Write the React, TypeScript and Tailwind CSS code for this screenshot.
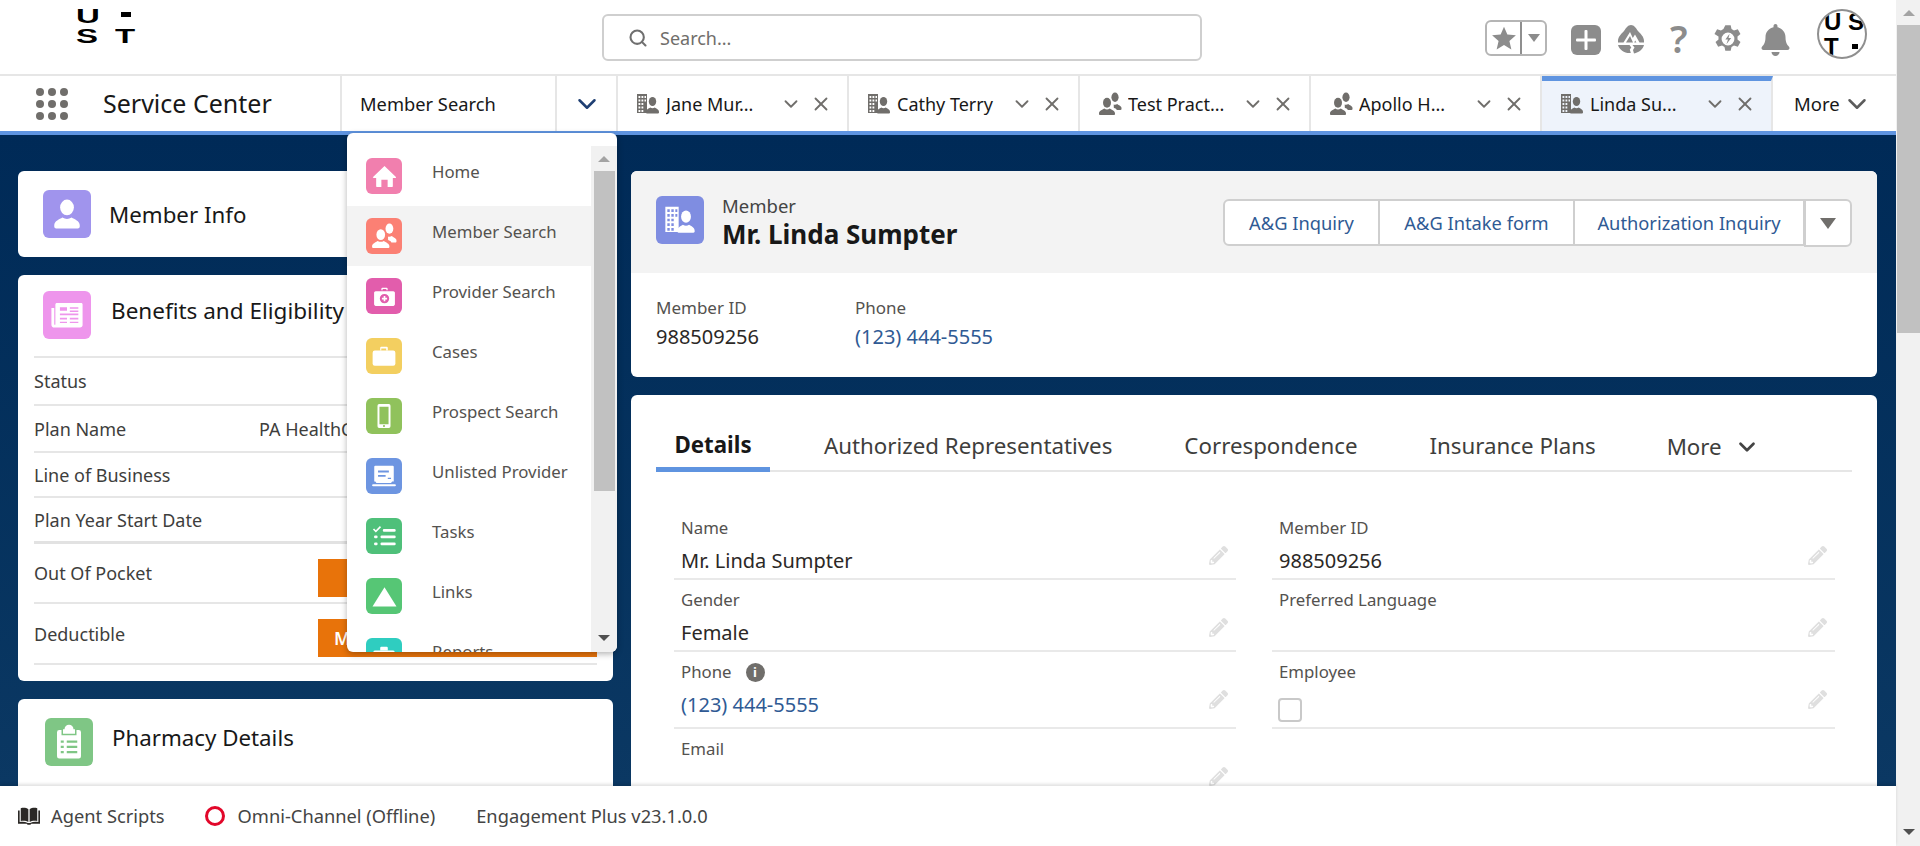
import { ChevronDown, Search, X } from 'lucide-react';
import { FaBell, FaPencilAlt } from 'react-icons/fa';

const font = "font-['Noto_Sans','Open_Sans',sans-serif]";

function PersonGlyph({ className }: { className: string }) {
  return (
    <svg viewBox="0 0 24 24" className={className} fill="currentColor">
      <ellipse cx="12" cy="7.6" rx="4.6" ry="5.2" />
      <path d="M3.500 19.500c0-3 3.600-4 5.400-5.200 2 1.300 4.200 1.300 6.200 0 1.800 1.200 5.400 2.200 5.400 5.200v.8c0 .8-.6 1.300-1.300 1.300H4.800c-.7 0-1.300-.5-1.300-1.300z" />
    </svg>
  );
}

function GroupGlyph({ className }: { className: string }) {
  return (
    <svg viewBox="0 0 24 24" className={className} fill="currentColor">
      <ellipse cx="9" cy="10.800" rx="4" ry="5" />
      <path d="M1 21.500c0-2.800 3.300-3.600 5.200-5 1.800 1.200 3.800 1.200 5.600 0 1.900 1.400 5.200 2.200 5.200 5v.7c0 .5-.4.800-.9.800H1.900c-.5 0-.9-.3-.9-.8z" />
      <ellipse cx="17" cy="5.200" rx="3.600" ry="4.700" />
      <path d="M18.800 18h3.800c.5 0 .9-.4.900-.9v-1.200c0-2-2.800-2.700-4.300-4-.8.700-2.300 1-3.500.6l.1 3.200c1.200.5 2.700 1 3 2.300z" />
    </svg>
  );
}

function BuildingGlyph({ className }: { className: string }) {
  return (
    <svg viewBox="0 0 24 24" className={className} fill="currentColor">
      <path
        fillRule="evenodd"
        d="M1 2h10v19H1zM2.500 4v2h1.800V4zm3 0v2h1.800V4zm3 0v2h1.500V4zM2.500 7.500v2h1.800v-2zm3 0v2h1.800v-2zm3 0v2h1.500v-2zM2.500 11v2h1.800v-2zm3 0v2h1.800v-2zM2.500 14.500v2h1.800v-2zm3 0v2h1.800v-2zM2.500 18v2h1.800v-2zm3 0v2h1.800v-2z"
      />
      <ellipse cx="16.500" cy="9.500" rx="3.700" ry="4.600" />
      <path d="M10 20c0-2.500 2.700-3.300 4.200-4.400 1.500 1 3.100 1 4.600 0 1.500 1.100 4.200 1.900 4.200 4.400v.6c0 .5-.4.900-.9.900H10.900c-.5 0-.9-.4-.9-.9z" />
    </svg>
  );
}

function PencilMark() {
  return <FaPencilAlt className="w-[19px] h-[19px] text-[#dfdfdf] shrink-0" />;
}

function Tile({ bg, className, children }: { bg: string; className: string; children: React.ReactNode }) {
  return (
    <div className={`${bg} ${className} rounded-md flex items-center justify-center text-white shrink-0`}>
      {children}
    </div>
  );
}

const menuItems: { label: string; bg: string; glyph: React.ReactNode }[] = [
  {
    label: 'Home',
    bg: 'bg-[#f17fae]',
    glyph: (
      <svg viewBox="0 0 24 24" className="w-[25px] h-[25px]" fill="currentColor">
        <path d="M12 2l11 10.500c.3.400 0 .9-.4.900H20v8c0 .4-.3.600-.6.600h-4.400v-7H9v7H4.600c-.3 0-.6-.2-.6-.6v-8H1.400c-.4 0-.7-.5-.4-.9z" />
      </svg>
    ),
  },
  { label: 'Member Search', bg: 'bg-[#fb8074]', glyph: <GroupGlyph className="w-[26px] h-[26px]" /> },
  {
    label: 'Provider Search',
    bg: 'bg-[#e25dac]',
    glyph: (
      <svg viewBox="0 0 24 24" className="w-[25px] h-[25px]" fill="currentColor">
        <path d="M9 4.500a1 1 0 0 1 1-1h4a1 1 0 0 1 1 1V6h-1.200V4.800h-3.600V6H9z" />
        <path
          fillRule="evenodd"
          d="M3.500 7h17c.8 0 1.500.7 1.500 1.500v11c0 .8-.7 1.500-1.500 1.500h-17c-.8 0-1.500-.7-1.500-1.500v-11C2 7.700 2.700 7 3.500 7zM12 9.500a4.500 4.500 0 1 0 0 9 4.500 4.500 0 0 0 0-9zm-.8 2h1.600v1.700h1.700v1.600h-1.700v1.700h-1.600v-1.700H9.500v-1.600h1.700z"
        />
      </svg>
    ),
  },
  {
    label: 'Cases',
    bg: 'bg-[#f3cf60]',
    glyph: (
      <svg viewBox="0 0 24 24" className="w-[26px] h-[26px]" fill="currentColor">
        <path d="M8.500 4.500a1 1 0 0 1 1-1h5a1 1 0 0 1 1 1V7h-1.500V5h-4.500v2H8.500z" />
        <rect x="1.500" y="7" width="21" height="14" rx="2" />
      </svg>
    ),
  },
  {
    label: 'Prospect Search',
    bg: 'bg-[#90c25c]',
    glyph: (
      <svg viewBox="0 0 24 24" className="w-[26px] h-[26px]" fill="currentColor">
        <path
          fillRule="evenodd"
          d="M7.500 1h9A1.500 1.500 0 0 1 18 2.500v19a1.500 1.500 0 0 1-1.500 1.500h-9A1.500 1.500 0 0 1 6 21.500v-19A1.500 1.500 0 0 1 7.500 1zm.3 2.500v16h8.400v-16zM12 20.200a1 1 0 1 0 0 2 1 1 0 0 0 0-2z"
        />
      </svg>
    ),
  },
  {
    label: 'Unlisted Provider',
    bg: 'bg-[#6d95e1]',
    glyph: (
      <svg viewBox="0 0 24 24" className="w-[26px] h-[26px]" fill="currentColor">
        <path
          fillRule="evenodd"
          d="M4 2.500h16a1 1 0 0 1 1 1V17h-1.500l-1 1.500H5L4 17H3V3.500a1 1 0 0 1 1-1zM6.500 7v1.800h10V7zm0 4v1.800h7V11zm9 2.500v1.300h3v-1.300z"
        />
        <rect x="1" y="19.500" width="22" height="2" rx="1" />
      </svg>
    ),
  },
  {
    label: 'Tasks',
    bg: 'bg-[#4fc07a]',
    glyph: (
      <svg viewBox="0 0 24 24" className="w-[28px] h-[28px]" fill="currentColor">
        <path d="M2.500 6.500l1-1 1.500 1.500 3.500-3.500 1 1-4.500 4.500z" />
        <rect x="11" y="6" width="11" height="2.400" rx="1" />
        <rect x="9" y="11.500" width="13" height="2.400" rx="1" />
        <rect x="9" y="17.500" width="13" height="2.400" rx="1" />
        <rect x="3.500" y="11.500" width="3" height="2.400" rx="1" />
        <rect x="3.500" y="17.500" width="3" height="2.400" rx="1" />
      </svg>
    ),
  },
  {
    label: 'Links',
    bg: 'bg-[#56c675]',
    glyph: (
      <svg viewBox="0 0 24 24" className="w-[25px] h-[25px]" fill="currentColor">
        <path d="M12 3l11.500 18.500H.5z" />
      </svg>
    ),
  },
  {
    label: 'Reports',
    bg: 'bg-[#2fcdc0]',
    glyph: (
      <svg viewBox="0 0 24 24" className="w-[26px] h-[26px]" fill="currentColor">
        <path d="M8.500 4.500a1 1 0 0 1 1-1h5a1 1 0 0 1 1 1V7h-7z" />
        <rect x="2" y="7" width="20" height="14" rx="2" />
      </svg>
    ),
  },
];

const tabs: { label: string; kind: 'building' | 'group'; active?: boolean }[] = [
  { label: 'Jane Mur...', kind: 'building' },
  { label: 'Cathy Terry', kind: 'building' },
  { label: 'Test Pract...', kind: 'group' },
  { label: 'Apollo H...', kind: 'group' },
  { label: 'Linda Su...', kind: 'building', active: true },
];

const benefitRows: { label: string; value?: string; rowClass: string }[] = [
  { label: 'Status', rowClass: 'h-[48px] border-b-2 border-[#e6e6e6]' },
  { label: 'Plan Name', value: 'PA HealthChoices', rowClass: 'h-[47px] border-b-2 border-[#e6e6e6]' },
  { label: 'Line of Business', rowClass: 'h-[45px] border-b-2 border-[#e6e6e6]' },
  { label: 'Plan Year Start Date', rowClass: 'h-[46px] border-b-[3px] border-[#e2e2e2]' },
];

const leftFields = [
  { label: 'Name', value: 'Mr. Linda Sumpter', h: 'h-[72px]' },
  { label: 'Gender', value: 'Female', h: 'h-[72px]' },
];

function Field({ label, h, children }: { label: React.ReactNode; h: string; children?: React.ReactNode }) {
  return (
    <div className={`${h} border-b-2 border-[#e9e9e9] pl-[7px] pr-[8px] flex justify-between`}>
      <div className="flex flex-col min-w-0">
        <div className="text-[16.800px] leading-[22px] mt-[9px] text-[#54524f]">{label}</div>
        <div className="text-[20px] leading-[26px] mt-[9px] text-[#2b2826]">{children}</div>
      </div>
      <div className="pt-[38px]">
        <PencilMark />
      </div>
    </div>
  );
}

export default function App() {
  return (
    <div className={`${font} w-[1920px] h-[846px] overflow-hidden flex bg-white text-[#181818]`}>
      <div className="w-[1896px] h-full flex flex-col relative">
        {/* global header */}
        <header className="h-[76px] shrink-0 border-b-2 border-[#e6e6e6] flex items-start">
          <div className="w-[602px] shrink-0 pl-[76px] pt-[7px]">
            <div className="grid grid-cols-[39px_22px] gap-y-[2px] font-['Liberation_Sans',sans-serif] font-bold text-black text-[20px] leading-[18px]">
              <span className="inline-block origin-left scale-x-[1.650]">U</span>
              <span className="bg-black w-[10px] h-[5px] mt-[5px] ml-[6px]" />
              <span className="inline-block origin-left scale-x-[1.650]">S</span>
              <span className="inline-block origin-left scale-x-[1.650]">T</span>
            </div>
          </div>
          <div className="w-[600px] h-[47px] mt-[14px] border-2 border-[#cfcfcf] rounded-md flex items-center pl-[24px] gap-[12px]">
            <Search className="w-[20px] h-[20px] text-[#6f6f6f]" strokeWidth={2.500} />
            <span className="text-[18px] text-[#706e6b] mt-[1px]">Search...</span>
          </div>
          <div className="ml-[283px] mt-[20px] w-[62px] h-[36px] border-2 border-[#b5b5b5] rounded-md flex items-center shrink-0">
            <div className="w-[35px] h-full border-r-2 border-[#8f8f8f] flex items-center justify-center">
              <svg viewBox="0 0 24 24" className="w-[26px] h-[26px] text-[#8c8c8c]" fill="currentColor">
                <path d="M12 1.500l3.100 7.300 7.900.7-6 5.200 1.800 7.800-6.800-4.100-6.800 4.100 1.800-7.800-6-5.200 7.900-.7z" />
              </svg>
            </div>
            <div className="flex-1 flex justify-center">
              <div className="w-0 h-0 border-x-[6px] border-x-transparent border-t-[8px] border-t-[#8c8c8c]" />
            </div>
          </div>
          <div className="ml-[24px] mt-[25px] w-[30px] h-[30px] rounded-md bg-[#8c8c8c] flex items-center justify-center shrink-0">
            <svg viewBox="0 0 24 24" className="w-[24px] h-[24px] text-white" fill="currentColor">
              <rect x="10.500" y="2" width="3" height="20" rx="1" />
              <rect x="2" y="10.500" width="20" height="3" rx="1" />
            </svg>
          </div>
          <svg viewBox="0 0 28 30" className="ml-[16px] mt-[24px] w-[28px] h-[30px] text-[#8c8c8c] shrink-0" fill="currentColor">
            <path d="M14 1c3 0 5 3 7 6 3 3 6 6 6 10v1.500h-4.500l-4.500-8-2.200 3.500L13 8 6.500 18.500H1V17c0-4 3-7 6-10 2-3 4-6 7-6z" />
            <path d="M9 18.500l4-6.500 3 6.500zM17.200 18.500l1-2 1.200 2z" />
            <path d="M1 21h11.500l1.800 2.500-1.500 2 1 3.500C7.500 29.500 2.500 26 1 21zM15.500 21H27c-1 4-5 7.500-10 8.500l-1-3.500 1.500-2.500z" />
          </svg>
          <span className="ml-[25px] mt-[15px] w-[19px] text-[38px] leading-[46px] font-semibold text-[#8c8c8c] shrink-0">?</span>
          <svg viewBox="0 0 28 30" className="ml-[24px] mt-[23px] w-[30px] h-[32px] text-[#8c8c8c] shrink-0" fill="currentColor">
            <path
              fillRule="evenodd"
              d="M11.500 1h5l.8 3.700 2.300 1.300 3.600-1.200 2.500 4.400-2.800 2.500v2.700l2.800 2.500-2.500 4.400-3.600-1.200-2.300 1.300-.8 3.700h-5l-.8-3.700-2.300-1.300-3.600 1.200-2.500-4.400 2.800-2.500v-2.700L1.300 9.200l2.500-4.400 3.600 1.200 2.300-1.300zM14 8a6 6 0 1 0 0 12 6 6 0 0 0 0-12z"
              transform="translate(0 1)"
            />
            <path d="M15.500 10l-4 5.500h2.500l-1.500 4.500 4.500-6h-2.500z" />
          </svg>
          <FaBell className="ml-[18px] mt-[24px] w-[29px] h-[32px] text-[#8c8c8c] shrink-0" />
          <div className="ml-[27px] mt-[9px] w-[50px] h-[50px] rounded-full border-2 border-[#8f8f8f] overflow-hidden shrink-0">
            <div className="grid grid-cols-[24px_15px] pl-[5px] -mt-[2px] font-['Liberation_Sans',sans-serif] font-bold text-black text-[24px] leading-[25px]">
              <span>U</span>
              <span>S</span>
              <span>T</span>
              <span className="bg-black w-[6px] h-[5px] ml-[4px] self-center" />
            </div>
          </div>
        </header>

        {/* app nav */}
        <nav className="h-[59px] shrink-0 flex items-stretch border-b-[4px] border-[#5f94e0] bg-white">
          <div className="w-[342px] shrink-0 flex items-center pt-[1px] border-r-2 border-[#e6e6e6]">
            <div className="ml-[36px] grid grid-cols-3 gap-x-[4px] gap-y-[4px] w-[32px]">
              {Array.from({ length: 9 }).map((_, i) => (
                <span key={i} className="w-[8px] h-[8px] rounded-full bg-[#706e6b]" />
              ))}
            </div>
            <span className="ml-[35px] text-[25px] text-[#181818] whitespace-nowrap">Service Center</span>
          </div>
          <div className="w-[215px] shrink-0 flex items-center pl-[18px] pt-[1px] border-r-2 border-[#e6e6e6] text-[18.300px]">
            Member Search
          </div>
          <div className="w-[61px] shrink-0 flex items-center justify-center border-r-2 border-[#e6e6e6]">
            <ChevronDown className="w-[30px] h-[30px] text-[#1f3f73]" strokeWidth={2} />
          </div>
          {tabs.map((t) => (
            <div
              key={t.label}
              className={`w-[231px] shrink-0 flex items-center pl-[18px] border-r-2 border-[#e6e6e6] text-[18px] ${
                t.active ? 'bg-[#eef3fb] border-t-[5px] border-t-[#5f94e0] pb-[4px]' : 'pt-[1px]'
              }`}
            >
              {t.kind === 'building' ? (
                <BuildingGlyph className="w-[24px] h-[24px] text-[#706e6b] shrink-0" />
              ) : (
                <GroupGlyph className="w-[24px] h-[24px] text-[#706e6b] shrink-0" />
              )}
              <span className="ml-[6px] w-[113px] whitespace-nowrap overflow-hidden">{t.label}</span>
              <ChevronDown className="w-[22px] h-[22px] text-[#706e6b] shrink-0 ml-[1px]" strokeWidth={2} />
              <X className="w-[22px] h-[22px] text-[#706e6b] shrink-0 ml-[8px]" strokeWidth={2} />
            </div>
          ))}
          <div className="flex-1 flex items-center pl-[21px] text-[18.500px]">
            More
            <ChevronDown className="w-[30px] h-[30px] text-[#5c5c5c] ml-[2px]" strokeWidth={2} />
          </div>
        </nav>

        {/* workspace */}
        <main className="flex-1 min-h-0 overflow-hidden bg-gradient-to-b from-[#002a57] to-[#0b3863] pl-[18px] pr-[19px] pt-[36px] flex gap-[18px] items-start">
          <div className="w-[595px] shrink-0 flex flex-col gap-[18px]">
            <section className="h-[86px] bg-white rounded-md flex items-center pl-[25px]">
              <Tile bg="bg-[#a094ed]" className="w-[48px] h-[48px]">
                <PersonGlyph className="w-[36px] h-[36px]" />
              </Tile>
              <h2 className="ml-[18px] mt-[1px] text-[22.300px]">Member Info</h2>
            </section>

            <section className="h-[406px] bg-white rounded-md px-[16px]">
              <div className="h-[83px] border-b-2 border-[#e6e6e6] flex items-start pl-[9px] pt-[16px]">
                <Tile bg="bg-[#ee95ec]" className="w-[48px] h-[48px]">
                  <svg viewBox="0 0 24 24" className="w-[34px] h-[34px]" fill="currentColor">
                    <path
                      fillRule="evenodd"
                      d="M5 3.500h17c.6 0 1 .4 1 1V19c0 1-.8 1.800-1.800 1.800H3c-1.200 0-2-.8-2-2V7h2v11.500c0 .5.800.5.800 0V4.500c0-.6.500-1 1.200-1zm2 3v2.500h5V6.500zm7 0v1h6v-1zm0 2.300v1h6v-1zM7 11v1.200h13V11zm0 3v1.200h5V14zm7 0v1.200h6V14zm-7 2.700v1h5v-1zm7 0v1h6v-1z"
                    />
                  </svg>
                </Tile>
                <h2 className="ml-[20px] mt-[3px] text-[22.500px] whitespace-nowrap">Benefits and Eligibility</h2>
              </div>
              {benefitRows.map((r) => (
                <div key={r.label} className={`${r.rowClass} flex items-center pt-[1px] text-[18px] text-[#3e3e3c]`}>
                  <span className="w-[225px] shrink-0">{r.label}</span>
                  {r.value && <span className="whitespace-nowrap">{r.value}</span>}
                </div>
              ))}
              <div className="h-[60px] border-b-2 border-[#e6e6e6] flex items-center text-[18px] text-[#3e3e3c]">
                <span className="w-[284px] shrink-0 mt-[1px]">Out Of Pocket</span>
                <div className="w-[279px] h-[38px] bg-[#e8730a] mt-[9px]" />
              </div>
              <div className="h-[61px] border-b-2 border-[#e6e6e6] flex items-center text-[18px] text-[#3e3e3c]">
                <span className="w-[284px] shrink-0 mt-[1px]">Deductible</span>
                <div className="w-[279px] h-[38px] bg-[#e8730a] mt-[9px] pl-[16px] text-white font-semibold leading-[38px]">
                  Medical
                </div>
              </div>
            </section>

            <section className="h-[120px] bg-white rounded-md flex items-start pl-[27px] pt-[19px]">
              <Tile bg="bg-[#7fc685]" className="w-[48px] h-[48px]">
                <svg viewBox="0 0 24 24" className="w-[36px] h-[36px]" fill="currentColor">
                  <path
                    fillRule="evenodd"
                    d="M8 3.500h1a3 3 0 0 1 6 0h1V6.500H8zM5.500 4H7v3.500h10V4h1.500A1.500 1.500 0 0 1 20 5.500v16a1.500 1.500 0 0 1-1.500 1.500h-13A1.500 1.500 0 0 1 4 21.500v-16A1.500 1.500 0 0 1 5.500 4zM6.500 11v1.500h2V11zm4 0v1.500h7V11zm-4 3.500V16h2v-1.500zm4 0V16h7v-1.500zm-4 3.500v1.500h2V18zm4 0v1.500h7V18z"
                  />
                </svg>
              </Tile>
              <h2 className="ml-[19px] mt-[3px] text-[22.300px]">Pharmacy Details</h2>
            </section>
          </div>

          <div className="w-[1246px] shrink-0 flex flex-col gap-[18px]">
            <section className="h-[206px] bg-white rounded-md overflow-hidden">
              <div className="h-[102px] bg-[#f3f3f3] flex items-start pl-[25px]">
                <Tile bg="bg-[#7f8de1]" className="w-[48px] h-[48px] mt-[25px]">
                  <BuildingGlyph className="w-[32px] h-[32px]" />
                </Tile>
                <div className="ml-[18px] mt-[23px]">
                  <div className="text-[18.500px] leading-[24px] text-[#444444]">Member</div>
                  <div className="text-[26px] leading-[32px] font-bold text-[#181818]">Mr. Linda Sumpter</div>
                </div>
                <div className="ml-auto mt-[28px] mr-[25px] flex items-start">
                  <div className="h-[47px] flex bg-white border-2 border-[#cfcfcf] rounded-l-md text-[18.300px] text-[#2f5a94]">
                    <span className="w-[155px] pt-[1px] flex items-center justify-center border-r-2 border-[#cfcfcf]">A&amp;G Inquiry</span>
                    <span className="w-[195px] pt-[1px] flex items-center justify-center border-r-2 border-[#cfcfcf]">A&amp;G Intake form</span>
                    <span className="w-[228px] pt-[1px] flex items-center justify-center">Authorization Inquiry</span>
                  </div>
                  <div className="w-[48px] h-[48px] bg-white border-2 border-[#cfcfcf] rounded-r-md -ml-[1px] flex items-center justify-center">
                    <div className="w-0 h-0 border-x-[8px] border-x-transparent border-t-[11px] border-t-[#706e6b]" />
                  </div>
                </div>
              </div>
              <div className="flex pl-[25px] pt-[23px]">
                <div className="w-[199px]">
                  <div className="leading-[24px] text-[17px] text-[#54524f]">Member ID</div>
                  <div className="leading-[28px] mt-[3px] text-[20px] text-[#2b2826]">988509256</div>
                </div>
                <div>
                  <div className="leading-[24px] text-[17px] text-[#54524f]">Phone</div>
                  <div className="leading-[28px] mt-[3px] text-[20px] text-[#2f5a94]">(123) 444-5555</div>
                </div>
              </div>
            </section>

            <section className="h-[400px] bg-white rounded-md px-[25px]">
              <div className="h-[77px] flex items-end border-b-2 border-[#e6e6e6] text-[22.300px] text-[#3e3e3c]">
                <div className="w-[114px] h-[78px] -mb-[2px] border-b-[5px] border-[#5f94e0] font-bold text-[#181818] flex items-center justify-center pt-[28px]">
                  Details
                </div>
                <div className="h-[76px] flex items-center pt-[28px] ml-[54px] whitespace-nowrap">Authorized Representatives</div>
                <div className="h-[76px] flex items-center pt-[28px] ml-[72px] whitespace-nowrap">Correspondence</div>
                <div className="h-[76px] flex items-center pt-[28px] ml-[72px] whitespace-nowrap">Insurance Plans</div>
                <div className="h-[76px] flex items-center pt-[30px] ml-[71px] whitespace-nowrap">
                  More
                  <ChevronDown className="w-[26px] h-[26px] ml-[12px] text-[#444444]" strokeWidth={2.500} />
                </div>
              </div>
              <div className="grid grid-cols-[562px_563px] gap-x-[36px] ml-[18px] mt-[36px]">
                <div className="flex flex-col">
                  {leftFields.map((f) => (
                    <Field key={f.label} label={f.label} h={f.h}>
                      {f.value}
                    </Field>
                  ))}
                  <Field
                    h="h-[77px]"
                    label={
                      <span className="flex items-center gap-[14px]">
                        Phone
                        <span className="w-[19px] h-[19px] rounded-full bg-[#706e6b] text-white text-[13px] font-bold leading-none flex items-center justify-center">
                          i
                        </span>
                      </span>
                    }
                  >
                    <span className="text-[#2f5a94]">(123) 444-5555</span>
                  </Field>
                  <Field h="h-[60px]" label="Email" />
                </div>
                <div className="flex flex-col">
                  <Field label="Member ID" h="h-[72px]">
                    988509256
                  </Field>
                  <Field label="Preferred Language" h="h-[72px]" />
                  <Field label="Employee" h="h-[77px]">
                    <div className="w-[24px] h-[24px] border-2 border-[#c9c9c9] rounded-[4px] -ml-[1px] mt-[6px]" />
                  </Field>
                </div>
              </div>
            </section>
          </div>
        </main>

        {/* utility bar */}
        <footer className="h-[60px] shrink-0 bg-white shadow-[0_-2px_3px_rgba(0,0,0,0.12)] relative flex items-center text-[18.300px] text-[#444444]">
          <svg viewBox="0 0 24 20" className="ml-[18px] w-[22px] h-[19px] text-[#2b2826] shrink-0" fill="currentColor">
            <path d="M3 1c3-.8 6-.5 8.300 1v14c-2.300-1.500-5.300-1.800-8.300-1zM21 1c-3-.8-6-.5-8.300 1v14c2.300-1.500 5.300-1.800 8.300-1z" />
            <path d="M0 3.500h1.800V16c3-.6 6-.4 9 1h2.400c3-1.400 6-1.600 9-1V3.500H24V18h-9.500l-1 1h-3l-1-1H0z" />
          </svg>
          <span className="ml-[11px]">Agent Scripts</span>
          <span className="ml-[40px] w-[20px] h-[20px] rounded-full border-[3px] border-[#e2072a] shrink-0" />
          <span className="ml-[13px]">Omni-Channel (Offline)</span>
          <span className="ml-[41px]">Engagement Plus v23.1.0.0</span>
        </footer>

        {/* app launcher menu, open over the page */}
        <div className="absolute left-[347px] top-[133px] w-[270px] h-[519px] bg-white rounded-md shadow-[0_2px_6px_rgba(0,0,0,0.3)] overflow-hidden flex">
          <ul className="w-[244px] shrink-0 pt-[13px]">
            {menuItems.map((m, i) => (
              <li key={m.label} className={`h-[60px] flex items-center pl-[19px] ${i === 1 ? 'bg-[#f3f3f3]' : ''}`}>
                <Tile bg={m.bg} className="w-[36px] h-[36px]">
                  {m.glyph}
                </Tile>
                <span className="ml-[30px] -mt-[8px] text-[16.800px] text-[#54524f]">{m.label}</span>
              </li>
            ))}
          </ul>
          <div className="flex-1 mt-[13px] bg-[#f1f1f1] flex flex-col items-center">
            <div className="h-[25px] flex items-center">
              <div className="w-0 h-0 border-x-[6px] border-x-transparent border-b-[6px] border-b-[#a3a3a3]" />
            </div>
            <div className="w-[21px] h-[320px] bg-[#c1c1c1]" />
            <div className="mt-auto h-[28px] flex items-center">
              <div className="w-0 h-0 border-x-[6px] border-x-transparent border-t-[6px] border-t-[#505050]" />
            </div>
          </div>
        </div>
      </div>

      {/* window scrollbar */}
      <div className="w-[24px] h-full bg-[#f1f1f1] flex flex-col items-center pl-[1px]">
        <div className="h-[25px] flex items-center">
          <div className="w-0 h-0 border-x-[6px] border-x-transparent border-b-[6px] border-b-[#a3a3a3]" />
        </div>
        <div className="w-full h-[308px] bg-[#c1c1c1]" />
        <div className="mt-auto h-[28px] flex items-center">
          <div className="w-0 h-0 border-x-[6px] border-x-transparent border-t-[6px] border-t-[#505050]" />
        </div>
      </div>
    </div>
  );
}
